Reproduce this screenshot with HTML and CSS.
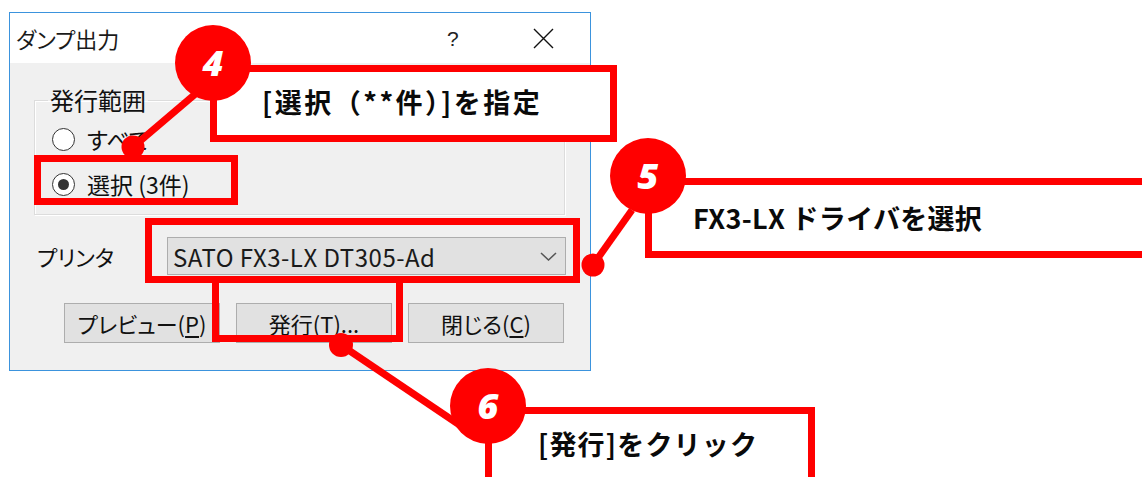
FILE: index.html
```html
<!DOCTYPE html>
<html lang="ja">
<head>
<meta charset="utf-8">
<title>ダンプ出力</title>
<link rel="stylesheet" href="styles.css">
</head>
<body>
<div class="page">
  <div class="dialog">
    <div class="titlebar">
      <span class="title">ダンプ出力</span>
      <span class="help">?</span>
      <svg class="close" width="21" height="21" viewBox="0 0 21 21"><path d="M1 1 L20 20 M20 1 L1 20" stroke="#111" stroke-width="1.4" fill="none"/></svg>
    </div>
    <div class="body">
      <fieldset class="group">
        <legend>発行範囲</legend>
        <div class="radio"><span class="radio-dot"></span><span>すべて</span></div>
        <div class="radio checked"><span class="radio-dot"></span><span>選択 (3件)</span></div>
      </fieldset>
      <div class="printer-row">
        <span class="plabel">プリンタ</span>
        <div class="combo">
          <span class="combo-text">SATO FX3-LX DT305-Ad</span>
          <svg class="chev" width="17" height="9" viewBox="0 0 17 9"><path d="M1 1 L8.5 8 L16 1" stroke="#555" stroke-width="1.5" fill="none"/></svg>
        </div>
      </div>
      <div class="buttons">
        <div class="btn">プレビュー(<u>P</u>)</div>
        <div class="btn">発行(<u>T</u>)...</div>
        <div class="btn">閉じる(<u>C</u>)</div>
      </div>
    </div>
  </div>

  <div class="hl hl1"></div>
  <div class="hl hl2"></div>
  <div class="hl hl3"></div>

  <svg class="connectors" width="1142" height="477" viewBox="0 0 1142 477">
    <g stroke="#ff0000" stroke-width="7" fill="none">
      <path d="M133 147 L200 90"/>
      <path d="M593 265 L632 210"/>
      <path d="M341 345 L470 432"/>
    </g>
    <g fill="#ff0000">
      <circle cx="133" cy="147" r="11.5"/>
      <circle cx="593" cy="265" r="11.5"/>
      <circle cx="341" cy="345" r="12"/>
    </g>
  </svg>

  <div class="callout c4">[選択（**件）]を指定</div>
  <div class="callout c5">FX3-LX ドライバを選択</div>
  <div class="callout c6">[発行]をクリック</div>

  <div class="num n4">4</div>
  <div class="num n5">5</div>
  <div class="num n6">6</div>
</div>
</body>
</html>
```

FILE: styles.css
```css
* { box-sizing: border-box; }
html, body {
  margin: 0;
  padding: 0;
  background: #ffffff;
}
.page {
  position: relative;
  width: 1142px;
  height: 477px;
  overflow: hidden;
  padding: 12px 0 0 9px;
  font-family: "Noto Sans CJK JP", "Noto Sans", sans-serif;
  color: #000;
}
.dialog {
  width: 582px;
  height: 359px;
  border: 1px solid #3b93dd;
  display: flex;
  flex-direction: column;
  font-feature-settings: "palt";
}
.titlebar {
  height: 50px;
  background: #fff;
  display: flex;
  align-items: center;
}
.title {
  flex: 1;
  padding-left: 6px;
  font-size: 22px;
  color: #1a1a1a;
  line-height: 1;
}
.help {
  width: 12px;
  margin-right: 74px;
  font-size: 21px;
  font-family: "Liberation Sans", sans-serif;
  color: #222;
  line-height: 1;
}
.close {
  margin-right: 36px;
  display: block;
}
.body {
  flex: 1;
  background: #f0f0f0;
  padding-top: 23px;
}
.group {
  margin: 0 0 0 24px;
  padding: 8px 0 0 17px;
  width: 531px;
  height: 129px;
  border: 1px solid #dcdcdc;
  box-shadow: inset 1px 1px 0 #fff, 1px 1px 0 #fff;
  display: flex;
  flex-direction: column;
  gap: 11px;
}
.group legend {
  margin-left: -4px;
  padding: 0 2px;
  font-size: 24px;
  line-height: 28px;
  color: #111;
}
.radio {
  display: flex;
  align-items: center;
  height: 34px;
  font-size: 23px;
  color: #111;
  gap: 12px;
}
.radio-dot {
  width: 23px;
  height: 23px;
  border-radius: 50%;
  border: 1.5px solid #333;
  background: #fff;
  display: flex;
  align-items: center;
  justify-content: center;
}
.radio.checked .radio-dot::after {
  content: "";
  width: 11px;
  height: 11px;
  border-radius: 50%;
  background: #333;
}
.printer-row {
  margin-top: 22px;
  display: flex;
  align-items: center;
  height: 38px;
}
.plabel {
  width: 157px;
  padding-left: 27px;
  font-size: 22px;
  color: #111;
}
.combo {
  width: 399px;
  height: 38px;
  background: #e1e1e1;
  border: 1px solid #adadad;
  display: flex;
  align-items: center;
  padding: 0 8px 0 5px;
}
.combo-text {
  flex: 1;
  font-size: 24px;
  letter-spacing: 0.5px;
  font-feature-settings: normal;
  color: #1a1a1a;
}
.chev { display: block; }
.buttons {
  margin-top: 28px;
  margin-left: 54px;
  display: flex;
  gap: 16px;
}
.btn {
  width: 156px;
  height: 40px;
  background: #e1e1e1;
  border: 1px solid #adadad;
  display: flex;
  align-items: center;
  justify-content: center;
  font-size: 22px;
  color: #111;
}
.btn u { text-underline-offset: 3px; }

.hl {
  position: absolute;
  border: 7px solid #ff0000;
}
.hl1 { left: 34px; top: 155px; width: 204px; height: 50px; }
.hl2 { left: 145px; top: 218px; width: 435px; height: 65px; }
.hl3 { left: 212px; top: 276px; width: 191px; height: 66px; }

.connectors {
  position: absolute;
  left: 0;
  top: 0;
}

.callout {
  position: absolute;
  background: #fff;
  border: 7px solid #ff0000;
  font-weight: 700;
  font-size: 27px;
  color: #0a0a0a;
  display: flex;
  align-items: center;
  white-space: nowrap;
}
.c4 { left: 210px; top: 65px; width: 407px; height: 77px; padding: 0 0 4px 45px; letter-spacing: 2.5px; }
.c5 { left: 645px; top: 178px; width: 520px; height: 80px; padding: 0 0 2px 41px; letter-spacing: 0.3px; }
.c6 { left: 485px; top: 407px; width: 330px; height: 100px; padding: 10px 0 0 46px; align-items: flex-start; letter-spacing: 1.2px; }

.num {
  position: absolute;
  width: 76px;
  height: 76px;
  border-radius: 50%;
  background: #ff0000;
  color: #fff;
  font-family: "Noto Sans", "DejaVu Sans", sans-serif;
  font-weight: 900;
  font-style: italic;
  font-size: 36px;
  line-height: 76px;
  text-align: center;
}
.n4 { left: 175px; top: 25px; }
.n5 { left: 610px; top: 138px; }
.n6 { left: 450px; top: 368px; }
```
